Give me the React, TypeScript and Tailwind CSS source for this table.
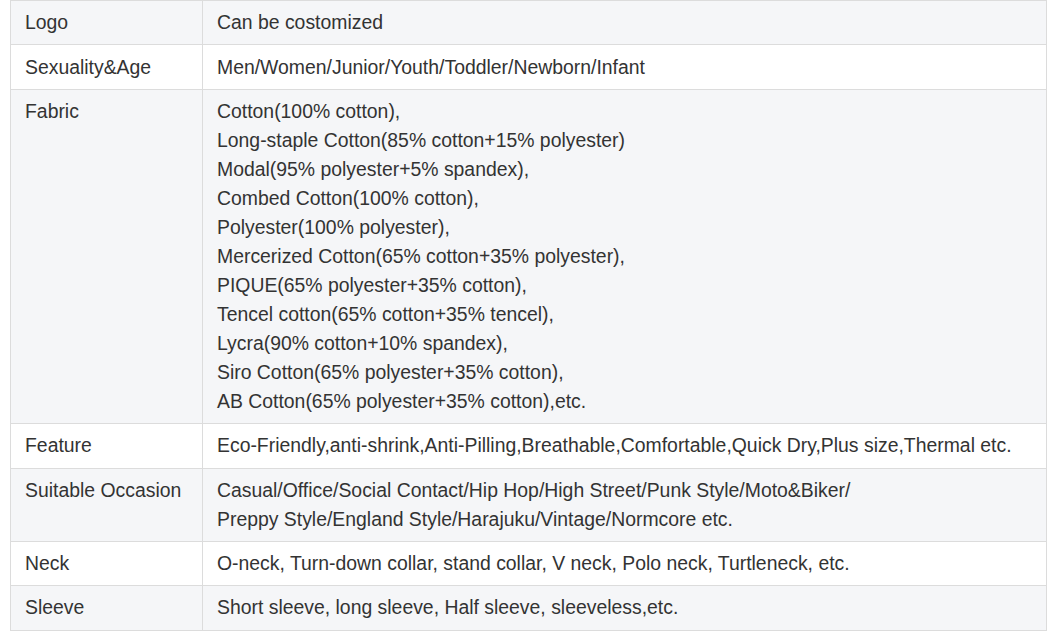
const rows: { label: string; lines: string[] }[] = [
  { label: 'Logo', lines: ['Can be costomized'] },
  { label: 'Sexuality&Age', lines: ['Men/Women/Junior/Youth/Toddler/Newborn/Infant'] },
  {
    label: 'Fabric',
    lines: [
      'Cotton(100% cotton),',
      'Long-staple Cotton(85% cotton+15% polyester)',
      'Modal(95% polyester+5% spandex),',
      'Combed Cotton(100% cotton),',
      'Polyester(100% polyester),',
      'Mercerized Cotton(65% cotton+35% polyester),',
      'PIQUE(65% polyester+35% cotton),',
      'Tencel cotton(65% cotton+35% tencel),',
      'Lycra(90% cotton+10% spandex),',
      'Siro Cotton(65% polyester+35% cotton),',
      'AB Cotton(65% polyester+35% cotton),etc.',
    ],
  },
  {
    label: 'Feature',
    lines: ['Eco-Friendly,anti-shrink,Anti-Pilling,Breathable,Comfortable,Quick Dry,Plus size,Thermal etc.'],
  },
  {
    label: 'Suitable Occasion',
    lines: [
      'Casual/Office/Social Contact/Hip Hop/High Street/Punk Style/Moto&Biker/',
      'Preppy Style/England Style/Harajuku/Vintage/Normcore etc.',
    ],
  },
  { label: 'Neck', lines: ['O-neck, Turn-down collar, stand collar, V neck, Polo neck, Turtleneck, etc.'] },
  { label: 'Sleeve', lines: ['Short sleeve, long sleeve, Half sleeve, sleeveless,etc.'] },
]

export default function App() {
  return (
    <div className="min-h-[631px] bg-white pl-[10px] font-['Liberation_Sans',Arial,sans-serif] text-[19.4px] leading-[29px] text-[#333]">
      <table className="w-[1037px] border-collapse">
        <tbody>
          {rows.map((row, i) => (
            <tr key={row.label} className={i % 2 === 0 ? 'bg-[#f5f6f8]' : 'bg-white'}>
              <td className="w-[192px] border border-[#dcdcdc] px-[14px] py-[7.2px] align-top whitespace-nowrap">
                {row.label}
              </td>
              <td className="border border-[#dcdcdc] px-[14px] py-[7.2px] align-top whitespace-nowrap">
                {row.lines.map((line) => (
                  <div key={line}>{line}</div>
                ))}
              </td>
            </tr>
          ))}
        </tbody>
      </table>
    </div>
  )
}
